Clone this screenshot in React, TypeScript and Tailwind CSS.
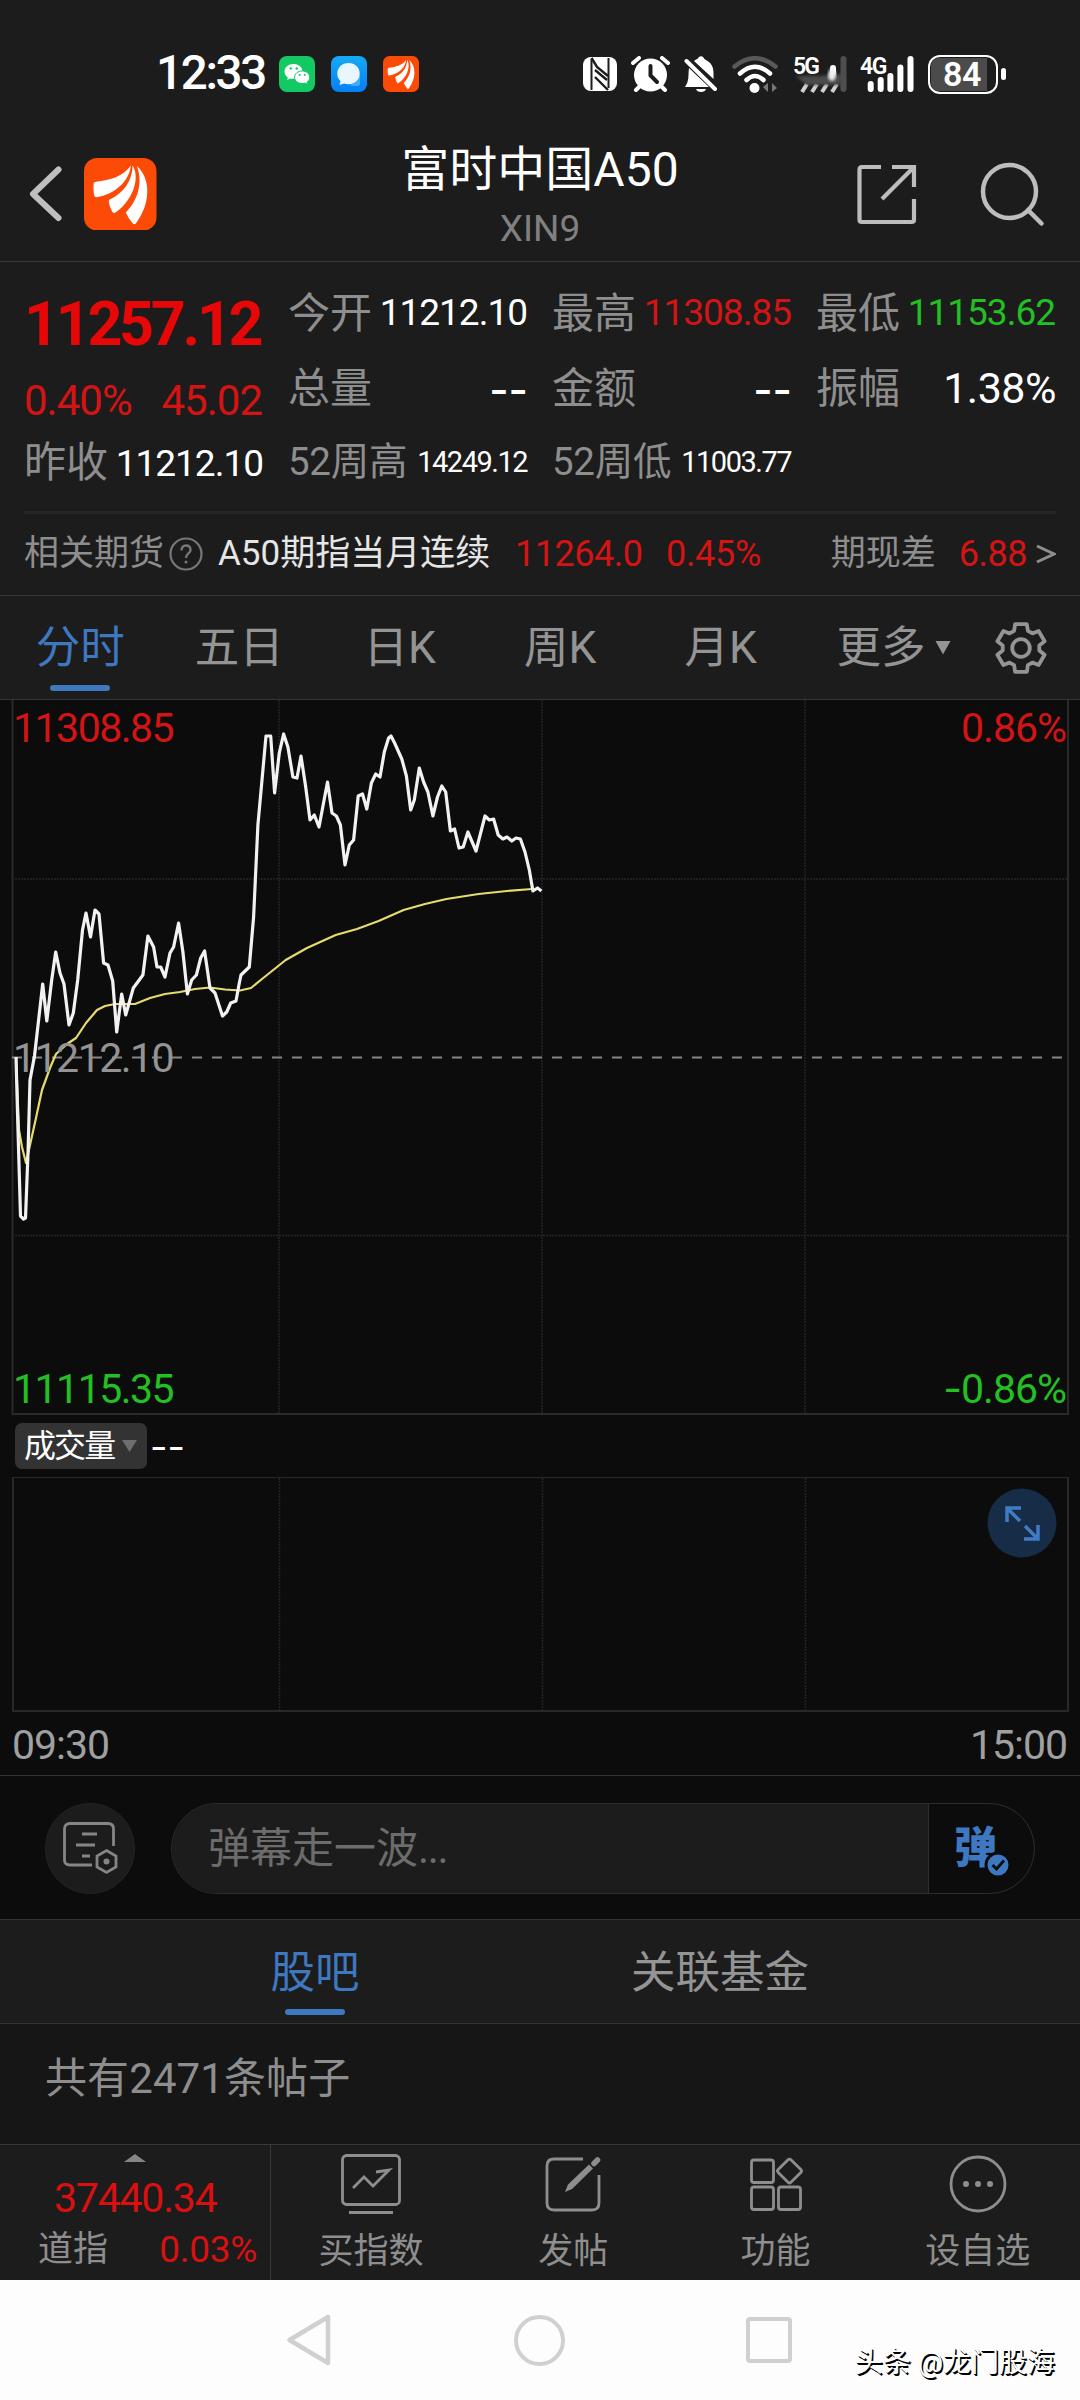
import type { ReactNode } from "react";
import clsx from "clsx";

const PRICE_POINTS =
  "16,1057 17.5,1113 20.5,1216 23.5,1219 25.5,1218 28,1153 30,1080 34.5,1056 42.7,984 46.8,1021 51.7,980 55.7,952 60,973 64,984 69,1025 73.3,1013 77.7,980 82.5,930 86,913 90.5,937 95,910 99,914 103.6,963 108,965 112.7,981 116.7,1032 121.7,994 125.7,1015 133.3,988 138.5,981 142.9,975 147.9,936 153.6,947 157,967 160.7,967 165,977 170,953 173.6,947 178.6,923 182.9,952 187.4,994 191.7,980 196.4,975 200.7,958 204.6,951 210,988 215,993 222.5,1016 226.7,1012 230.7,1003 236,1001 239.3,983 241,975 249.3,967 253.6,917 257.9,825 266,736 270.7,736 274.6,793 279.3,753 283.6,734 287.9,747 292.9,777 297,778 301,756 305.7,787 310,820 314.3,815 319,827 327.5,782 332,813 336.4,816 340.4,825 345,865 349.3,845 353.6,840 358.2,796 362.5,794 366.8,809 371.4,783 375.7,774 380,777 384.3,752 388.6,738 391,736 394.6,743 401.8,759 406.4,776 410.7,810 414.3,800 419.3,768 423.6,782 427.9,792 432.9,816 437.5,797 441.8,786 445.7,792 450.4,831 454.6,829 459,848 463.2,847 467.9,832 476,851 485,816 489.3,820 493.6,819 498.2,835 502.9,839 507,837 511.8,841 516,838 520.4,839 525,852 529.3,870 532.9,891 537.5,888 541.4,891";

const AVERAGE_POINTS =
  "16,1057 19,1130 22,1147 26,1163 30,1145 36,1118 42,1090 50,1068 56,1054 67,1044 76,1038 86,1023 97,1010 105,1006 115,1004 135,1004 150,998 165,994 180,992 195,989 210,987.5 225,989.5 240,990.5 251,988 262,979 285.7,960 307,948 335.7,935 357,929 378.6,921 403.6,910 425,904 446.4,899 478.6,894 507,891 532,889";

const QUOTES = [
  [
    { label: "今开", value: "11212.10" },
    { label: "总量", value: "--" },
    { label: "52周高", value: "14249.12", small: true },
  ],
  [
    { label: "最高", value: "11308.85", color: "text-[#d41414]" },
    { label: "金额", value: "--" },
    { label: "52周低", value: "11003.77", small: true },
  ],
  [
    { label: "最低", value: "11153.62", color: "text-[#22c022]" },
    { label: "振幅", value: "1.38%", large: true },
  ],
];

type Quote = { label: string; value: string; color?: string; small?: boolean; large?: boolean };

// Six-toothed cog outline centred on 27,27
const GEAR_POINTS = [0, 60, 120, 180, 240, 300]
  .flatMap((a) => [
    [a - 22, 18.5],
    [a - 14, 24.5],
    [a + 14, 24.5],
    [a + 22, 18.5],
  ])
  .map(([a, r]) => {
    const t = ((a - 90) * Math.PI) / 180;
    return `${(27 + r * Math.cos(t)).toFixed(1)},${(27 + r * Math.sin(t)).toFixed(1)}`;
  })
  .join(" ");

function BrandLogo({ className }: { className: string }) {
  return (
    <svg viewBox="0 0 72 72" className={className}>
      <rect width="72" height="72" rx="13" fill="#fb4b07" />
      <g fill="#fff">
        <path d="M9.5 25.5Q10 23.7 12 23.5C26 22 39 18.500 46.500 7.500C45 23 31 36 12.500 39Q10.500 39 10 37Q9 31 9.500 25.500Z" />
        <path d="M24.500 43Q24.500 41.500 26 41C39 35 48 23 48.300 7.500C57 22 46 45 30.500 54.500Q29 55 28 53.500Q25.500 49 24.500 43Z" />
        <path d="M52.500 8C67 21 66 46 51.500 65Q50 66.500 48.500 65Q44 60 41.500 54C53 43 59 25 52.500 8Z" />
      </g>
    </svg>
  );
}

function StatusBar() {
  return (
    <div className="flex h-[112px] shrink-0 items-center pt-[36px] pl-[156px]">
      <span className="w-[123px] text-[47.500px] leading-none font-medium tracking-[-2.300px] text-white">12:33</span>
      <svg viewBox="0 0 36 36" className="h-[36px] w-[36px]">
        <rect width="36" height="36" rx="8" fill="#13c964" />
        <path d="M14.500 8C9.500 8 5.500 11.300 5.500 15.500C5.500 18 6.800 20 8.800 21.300L8.200 24L11.300 22.400Q13 22.900 14.500 22.800C20 22.500 23.500 19.500 23.500 15.500C23.500 11.300 19.500 8 14.500 8Z" fill="#fff" />
        <path d="M23.200 15C18.800 15 15.600 17.700 15.600 21.300S18.800 27.500 23.200 27.500Q24.700 27.500 26 27.100L28.600 28.500L28 26.200C29.700 25.100 30.700 23.300 30.700 21.300C30.700 17.700 27.500 15 23.200 15Z" fill="#fff" stroke="#13c964" />
        <g fill="#13c964">
          <circle cx="11.700" cy="12.500" r="1.200" />
          <circle cx="17.700" cy="12.500" r="1.200" />
          <circle cx="20.700" cy="19" r="1" />
          <circle cx="25.700" cy="19" r="1" />
        </g>
      </svg>
      <svg viewBox="0 0 36 36" className="ml-[16px] h-[36px] w-[36px]">
        <defs>
          <linearGradient id="msg" x1="0" y1="0" x2="0" y2="1">
            <stop offset="0" stopColor="#16aaf5" />
            <stop offset="1" stopColor="#067ff5" />
          </linearGradient>
        </defs>
        <rect width="36" height="36" rx="8" fill="url(#msg)" />
        <path d="M20 19H29V28Q29 30 27 30H20Z" fill="#3faaf8" />
        <path d="M17.500 7C11 7 6.300 11.800 6.300 17.500Q6.300 22 9.500 25L8.500 29L13 27.500Q15 28.200 17.500 28.200C24 28.200 28.700 23.500 28.700 17.500S24 7 17.500 7Z" fill="#e8f6ff" />
      </svg>
      <BrandLogo className="ml-[16px] h-[36px] w-[36px]" />

      <svg viewBox="0 0 34 36" className="ml-[164px] h-[36px] w-[34px]" fill="none">
        <rect x="0" y="1" width="34" height="34" rx="8" fill="#fff" />
        <g stroke="#1c1c1c" strokeWidth="2">
          <path d="M8.500 3V34M25.500 2V32" />
          <path d="M8.500 2L14 11L25 20M12 14L24 24M12 21L25 34" strokeWidth="2.400" />
        </g>
      </svg>
      <svg viewBox="0 0 39 36" className="ml-[14px] h-[36px] w-[39px]" fill="none">
        <circle cx="19.500" cy="19" r="16.500" fill="#fff" />
        <path d="M2 7L8 2M37 7L31 2M8 31L5 34M31 31L34 34" stroke="#fff" strokeWidth="4" strokeLinecap="round" />
        <path d="M19.500 10V19.500L26 26" stroke="#1c1c1c" strokeWidth="4" strokeLinecap="round" />
      </svg>
      <svg viewBox="0 0 34 36" className="ml-[14px] h-[36px] w-[34px]" fill="none">
        <path d="M12 3.500Q14 3 14.500 1.500Q17 -1 19.500 1.500Q20 3 22 4C27.500 7 29.500 11 29.500 17V23L10 5Q11 4 12 3.500Z" fill="#fff" />
        <path d="M5 12Q4.500 15 4.500 19Q4.500 26 1 31H25Z" fill="#fff" />
        <path d="M12 33H22Q21 36 17 36T12 33Z" fill="#fff" />
        <path d="M2.500 5L31 33" stroke="#fff" strokeWidth="4" strokeLinecap="round" />
      </svg>
      <svg viewBox="0 0 47 37" className="ml-[14px] h-[37px] w-[47px]" fill="none" strokeLinecap="round">
        <path d="M2.500 10.500Q23 -6 43.500 10.500" stroke="#595959" strokeWidth="4.500" />
        <path d="M8 17.500Q23 4 38 17.500M14.500 24Q23 16 31.500 24" stroke="#fff" strokeWidth="4.500" />
        <circle cx="22.500" cy="32" r="5" fill="#fff" />
        <path d="M36 27V36L31 31ZM40 36V27L45 32Z" fill="#777" />
      </svg>
      <svg viewBox="0 0 54 37" className="ml-[14px] h-[37px] w-[54px] overflow-visible">
        <defs>
          <filter id="smear">
            <feGaussianBlur stdDeviation="1.800" />
          </filter>
        </defs>
        <text x="0" y="17.500" fill="#fff" fontSize="23" fontWeight="600" letterSpacing="-2">5G</text>
        <rect x="47.500" y="0" width="6" height="36" rx="3" fill="#4e4e4e" />
        <path d="M9 36L14 28M19 36L24 28M29 36L34 28M39 36L44 28" stroke="#d0d0d0" strokeWidth="4" />
        <rect x="37" y="9" width="6" height="16" rx="3" fill="#fff" />
        <path d="M3 20L26 20L50 18L48 29L14 29Z" fill="#4c4c4c" filter="url(#smear)" />
        <ellipse cx="39" cy="19" rx="4" ry="6" fill="#eee" filter="url(#smear)" />
      </svg>
      <svg viewBox="0 0 55 37" className="ml-[13px] h-[37px] w-[55px] overflow-visible" fill="#fff">
        <text x="0" y="17.500" fontSize="23" fontWeight="600" letterSpacing="-1.500">4G</text>
        <rect x="7.700" y="25" width="6" height="11" rx="3" />
        <rect x="17.700" y="21" width="6" height="15" rx="3" />
        <rect x="27.400" y="17" width="6" height="19" rx="3" />
        <rect x="37.400" y="8.500" width="6" height="27.500" rx="3" />
        <rect x="47.500" y="0" width="6" height="36" rx="3" />
      </svg>
      <div className="ml-[13px] flex items-center gap-[3px]">
        <div className="flex h-[39px] w-[70px] items-center rounded-[12px] border-[2.500px] border-white bg-[#1c1c1c] p-[1px]">
          <div className="flex h-full w-[56px] items-center justify-center rounded-l-[8px] bg-[#4b4b4b] pl-[6px] text-[34px] leading-none font-semibold tracking-[-0.500px] text-white">84</div>
        </div>
        <div className="h-[12px] w-[5px] rounded-full bg-white" />
      </div>
    </div>
  );
}

function Header() {
  return (
    <div className="flex h-[150px] shrink-0 items-center border-b border-[#383838] pt-[15px]">
      <div className="flex w-[270px] items-center pl-[28px]">
        <svg viewBox="0 0 36 58" className="h-[58px] w-[36px]" fill="none">
          <path d="M30.500 4.500L5 29L30.500 53" stroke="#bfbfbf" strokeWidth="6" strokeLinecap="round" strokeLinejoin="round" />
        </svg>
        <BrandLogo className="ml-[20px] h-[72.500px] w-[72.500px]" />
      </div>
      <div className="mt-[14px] flex flex-1 flex-col items-center self-start">
        <div className="h-[58px] text-[48px] leading-[58px] whitespace-nowrap text-white">富时中国A50</div>
        <div className="h-[58px] text-[37px] leading-[59px] text-[#808080]">XIN9</div>
      </div>
      <div className="flex w-[270px] items-center pl-[46px]">
        <svg viewBox="0 0 62 62" className="h-[62px] w-[62px]" fill="none" stroke="#bdbdbd" strokeWidth="4.200">
          <path d="M25 4H6Q3.500 4 3.500 6.500V56.500Q3.500 59 6 59H55.500Q58 59 58 56.500V36" />
          <path d="M36 4H58V24M58 4L26 36" />
        </svg>
        <svg viewBox="0 0 66 66" className="ml-[62px] h-[66px] w-[66px]" fill="none" stroke="#bdbdbd">
          <circle cx="29.500" cy="30.500" r="26.500" strokeWidth="4.500" />
          <path d="M48 49L61.500 62.500" strokeWidth="4.500" strokeLinecap="round" />
        </svg>
      </div>
    </div>
  );
}

function QuoteRow({ label, value, color = "text-white", small, large }: Quote) {
  return (
    <div className="flex h-[75px] items-center justify-between whitespace-nowrap">
      <span className={clsx("leading-none text-[#8e8e8e]", small ? "text-[38.500px] tracking-[-0.300px]" : "pt-[2px] text-[42px]")}>{label}</span>
      <span
        className={clsx(
          "leading-none",
          color,
          value === "--" && "pt-[4px] font-['Inter'] text-[42px] font-medium",
          value !== "--" && small && "pr-[1px] text-[29px] tracking-[-1.500px]",
          value !== "--" && large && "pt-[2px] text-[43px] tracking-[-0.500px]",
          value !== "--" && !small && !large && "pr-[1px] text-[37px] tracking-[-1px]",
        )}
      >
        {value}
      </span>
    </div>
  );
}

function QuotePanel() {
  return (
    <div className="shrink-0 px-[24px] pt-[13px]">
      <div className="grid h-[236px] grid-cols-4 gap-[24px]">
        <div className="whitespace-nowrap">
          <div className="flex h-[98px] items-center pt-[1px] text-[61px] leading-none font-bold tracking-[-3.300px] text-[#e60808]">11257.12</div>
          <div className="flex h-[54px] items-center justify-between pt-[1px] pr-[2px] text-[42px] leading-none tracking-[-1px] text-[#d41414]">
            <span>0.40%</span>
            <span>45.02</span>
          </div>
          <div className="flex h-[72px] items-center justify-between pr-[1px] leading-none">
            <span className="text-[42px] text-[#8e8e8e]">昨收</span>
            <span className="text-[37px] tracking-[-1px] text-white">11212.10</span>
          </div>
        </div>
        {QUOTES.map((column, i) => (
          <div key={i}>
            {column.map((q) => (
              <QuoteRow key={q.label} {...q} />
            ))}
          </div>
        ))}
      </div>
      <div className="h-[3px] bg-[#262626]" />
      <div className="flex h-[81px] items-center pb-[2px] text-[35px] leading-none whitespace-nowrap text-[#8e8e8e]">
        <span className="w-[145px]">相关期货</span>
        <svg viewBox="0 0 34 34" className="h-[34px] w-[34px]" fill="none" stroke="#777">
          <circle cx="17" cy="17" r="15.500" strokeWidth="2.200" />
          <path d="M12.500 13.500Q12.500 8.500 17 8.500T21.500 13C21.500 16.500 17 16.500 17 21" strokeWidth="2.400" />
          <circle cx="17" cy="25" r="1.500" fill="#777" stroke="none" />
        </svg>
        <span className="ml-[15px] w-[297px] text-[#e6e6e6]">A50期指当月连续</span>
        <span className="w-[151px] text-[36px] tracking-[-0.500px] text-[#d41414]">11264.0</span>
        <span className="text-[36px] tracking-[-0.300px] text-[#d41414]">0.45%</span>
        <span className="ml-auto">期现差</span>
        <span className="ml-[23px] text-[36px] tracking-[-0.500px] text-[#d41414]">6.88</span>
        <svg viewBox="0 0 20 20" className="ml-[9px] h-[20px] w-[20px]" fill="none">
          <path d="M1 2L18 10L1 18" stroke="#8e8e8e" strokeWidth="3" />
        </svg>
      </div>
    </div>
  );
}

function PeriodTabs() {
  return (
    <div className="flex h-[105px] shrink-0 items-center border-y border-[#363636] text-[44.500px] leading-none text-[#949494]">
      {["分时", "五日", "日K", "周K", "月K"].map((tab, i) => (
        <div key={tab} className={clsx("relative flex h-full w-[160.500px] items-center justify-center pt-[2px]", i === 0 ? "text-[#3d78c0]" : "pr-[3px]")}>
          {tab}
          {i === 0 && <span className="absolute bottom-[8px] h-[6px] w-[60px] rounded-full bg-[#3d78c0]" />}
        </div>
      ))}
      <span className="ml-[34px] pt-[2px]">更多</span>
      <svg viewBox="0 0 16 14" className="ml-[9px] h-[14px] w-[16px]">
        <path d="M0.500 0H15.500L8 13.500Z" fill="#949494" />
      </svg>
      <svg viewBox="0 0 54 54" className="ml-[43px] h-[54px] w-[54px]" fill="none" stroke="#949494" strokeWidth="3.800">
        <polygon points={GEAR_POINTS} strokeLinejoin="round" />
        <circle cx="27" cy="27" r="8.800" />
      </svg>
    </div>
  );
}

function PriceChart() {
  return (
    <svg viewBox="0 700 1080 716" className="block h-[716px] w-[1080px] shrink-0" fill="none">
      <path d="M12.500 700V1414H1068V700" stroke="#2a2a2a" strokeWidth="2" />
      <g stroke="#242424" strokeWidth="1.500" strokeDasharray="2 1">
        <path d="M279 700V1414M542 700V1414M805 700V1414" />
        <path d="M12 879H1068M12 1235.500H1068" />
      </g>
      <path d="M12 1057.500H1068" stroke="#858585" strokeWidth="2" strokeDasharray="10 10" />
      <polyline points={AVERAGE_POINTS} stroke="#e6dc6e" strokeWidth="2.200" strokeLinejoin="round" />
      <polyline points={PRICE_POINTS} stroke="#f2f2f2" strokeWidth="3.200" strokeLinejoin="round" />
      <g fontSize="41" letterSpacing="-1.500">
        <text x="13" y="742" fill="#d41414">11308.85</text>
        <text x="13" y="1072" fill="#949494">11212.10</text>
        <text x="13" y="1403" fill="#22c022">11115.35</text>
        <text x="1066" y="742" fill="#d41414" textAnchor="end" letterSpacing="-1">0.86%</text>
        <text x="1066" y="1403" fill="#22c022" textAnchor="end" letterSpacing="-1">
          <tspan fontFamily="Inter">-</tspan>0.86%
        </text>
      </g>
    </svg>
  );
}

function VolumeChart() {
  return (
    <div className="h-[360px] shrink-0 border-b border-[#333]">
      <div className="flex h-[61px] items-center pb-[2px] pl-[15px]">
        <div className="flex h-[46px] w-[132px] items-center rounded-[7px] bg-[#333] pl-[9px]">
          <span className="text-[32px] leading-none tracking-[-1.900px] whitespace-nowrap text-white">成交量</span>
          <svg viewBox="0 0 15 12" className="ml-[8px] h-[12px] w-[15px]">
            <path d="M0 0H15L7.500 12Z" fill="#6e6e6e" />
          </svg>
        </div>
        <span className="ml-[3px] font-['Inter'] text-[38px] leading-none text-white">--</span>
      </div>
      <div className="relative ml-[11.500px] h-[235px] w-[1057px] border-2 border-t border-[#282828]">
        <svg viewBox="0 0 1053 232" className="h-[232px] w-[1053px]" stroke="#242424" strokeWidth="1.500" strokeDasharray="2 1">
          <path d="M265.500 0V232M528.500 0V232M791.500 0V232" />
        </svg>
        <svg viewBox="0 0 70 70" className="absolute top-[10px] right-[10px] h-[70px] w-[70px]" fill="none">
          <circle cx="35" cy="35" r="34.500" fill="#172c46" />
          <path d="M20 34V20H34M20 20L33 33M51 37V51H37M51 51L38 38" stroke="#407cc4" strokeWidth="3.500" />
        </svg>
      </div>
      <div className="flex h-[63px] items-center justify-between pt-[3px] pr-[13px] pl-[12px] text-[41px] leading-none tracking-[-1px] text-[#a0a0a0]">
        <span>09:30</span>
        <span>15:00</span>
      </div>
    </div>
  );
}

function DanmuBar() {
  return (
    <div className="flex h-[144px] shrink-0 items-center border-b border-[#333] pt-[1px] pl-[45px]">
      <div className="flex h-[91px] w-[90px] items-center justify-center rounded-full border border-[#242424] bg-[#1c1c1c]">
        <svg viewBox="0 0 56 54" className="h-[54px] w-[56px]" fill="none" stroke="#858585" strokeWidth="2.800">
          <path d="M30 44H8Q2.500 44 2.500 39V8Q2.500 2.500 8 2.500H46Q51.500 2.500 51.500 8V25" />
          <path d="M20 13H35M14 24H33M20 35H28" />
          <path d="M44.500 29.500L54 35V46L44.500 51.500L35 46V35Z" />
          <circle cx="44.500" cy="40.500" r="3" fill="#858585" stroke="none" />
        </svg>
      </div>
      <div className="ml-[36px] flex h-[91px] w-[864px] overflow-hidden rounded-full border border-[#2e2e2e]">
        <div className="flex w-[757px] items-center border-r border-[#2e2e2e] bg-[#1c1c1c] pt-[2px] pl-[36px] text-[42px] leading-none text-[#6c6c6c]">
          弹幕走一波<span className="tracking-[-1.300px]">...</span>
        </div>
        <div className="relative flex flex-1 items-center pl-[25px]">
          <span className="text-[43px] leading-none font-black text-[#3d78c0]">弹</span>
          <svg viewBox="0 0 28 28" className="absolute top-[47px] left-[55px] h-[28px] w-[28px]" fill="none">
            <circle cx="14" cy="14" r="12" fill="#3d78c0" stroke="#0c0c0c" strokeWidth="3" />
            <path d="M8.500 14L12.500 18L20 9.500" stroke="#0c0c0c" strokeWidth="2.800" />
          </svg>
        </div>
      </div>
    </div>
  );
}

function Community() {
  return (
    <>
      <div className="flex h-[104px] shrink-0 border-b border-[#333] bg-[#1c1c1c] px-[112.500px] text-[44.500px] leading-none text-[#949494]">
        <div className="relative flex w-[405px] items-center justify-center pt-[3px] text-[#3d78c0]">
          股吧
          <span className="absolute bottom-[8px] h-[6px] w-[60px] rounded-full bg-[#3d78c0]" />
        </div>
        <div className="flex w-[405px] items-center justify-center pt-[3px]">关联基金</div>
      </div>
      <div className="flex h-[120px] shrink-0 items-center bg-[#161616] pb-[11px] pl-[45px] text-[42px] leading-none tracking-[0.100px] text-[#8e8e8e]">
        共有2471条帖子
      </div>
    </>
  );
}

function ToolItem({ label, children }: { label: string; children: ReactNode }) {
  return (
    <div className="flex flex-1 flex-col items-center pt-[8px] pr-[2px] text-[#8e8e8e]">
      <svg viewBox="0 0 62 62" className="h-[62px] w-[62px]" fill="none" stroke="currentColor" strokeWidth="2.800">
        {children}
      </svg>
      <span className="mt-[19px] text-[35px] leading-none">{label}</span>
    </div>
  );
}

function BottomBar() {
  return (
    <div className="flex h-[136px] shrink-0 border-t border-[#383838] bg-[#1c1c1c]">
      <div className="flex w-[271px] flex-col border-r border-[#383838] whitespace-nowrap">
        <svg viewBox="0 0 22 8" className="mt-[9px] ml-[124px] h-[8px] w-[22px]">
          <path d="M11 0L22 8H0Z" fill="#858585" />
        </svg>
        <div className="mt-[15px] pl-[54px] text-[41px] leading-[43px] tracking-[-1.200px] text-[#d81010]">37440.34</div>
        <div className="mt-[7px] flex h-[44px] items-center justify-between pr-[13px] pl-[38px] leading-none">
          <span className="text-[35px] text-[#8e8e8e]">道指</span>
          <span className="text-[37px] tracking-[-0.300px] text-[#d81010]">0.03%</span>
        </div>
      </div>
      <ToolItem label="买指数">
        <rect x="2.500" y="2.500" width="57" height="49" rx="4" />
        <path d="M13 35L24 24L33 33L49 17M36 19L49 17L41 25" />
        <path d="M9 59.500H53" />
      </ToolItem>
      <ToolItem label="发帖">
        <path d="M41 6H12Q5 6 5 13V50Q5 57 12 57H50Q57 57 57 50V22" />
        <path d="M23 39L26 31.500L47 11.500L51 15.500L30 36Z" fill="currentColor" stroke="none" />
        <path d="M52 10.500L55.500 7" strokeWidth="5.500" strokeLinecap="round" />
      </ToolItem>
      <ToolItem label="功能">
        <rect x="6.500" y="7" width="22" height="22.500" rx="2.500" />
        <rect x="6.500" y="34" width="22" height="22.500" rx="2.500" />
        <rect x="33.500" y="34" width="22" height="22.500" rx="2.500" />
        <rect x="35.500" y="9" width="18" height="18" rx="2" transform="rotate(45 44.500 18)" />
      </ToolItem>
      <ToolItem label="设自选">
        <circle cx="31" cy="31" r="27" />
        <g fill="currentColor" stroke="none">
          <circle cx="19" cy="31" r="3" />
          <circle cx="31" cy="31" r="3" />
          <circle cx="43" cy="31" r="3" />
        </g>
      </ToolItem>
    </div>
  );
}

function SystemNav() {
  return (
    <div className="flex h-[120px] shrink-0 items-center bg-[#fdfdfd] pl-[286px]">
      <svg viewBox="0 0 46 54" className="h-[54px] w-[46px]" fill="none">
        <path d="M42 4V50L3.500 27Z" stroke="#d0d0d0" strokeWidth="4.500" strokeLinejoin="round" />
      </svg>
      <div className="ml-[182px] h-[51px] w-[51px] rounded-full border-[4.500px] border-[#d0d0d0]" />
      <div className="ml-[181px] h-[46px] w-[46px] rounded-[4px] border-[4.500px] border-[#d0d0d0]" />
      <div className="mt-[45px] ml-[63px] text-[28px] leading-none whitespace-nowrap text-white [text-shadow:1.5px_1.5px_0_#000,0.5px_0.5px_0_#000]">
        头条 @龙门股海
      </div>
    </div>
  );
}

export default function App() {
  return (
    <div className="flex h-[2400px] w-[1080px] flex-col overflow-hidden bg-[#0c0c0c] font-['Roboto','Noto_Sans_CJK_SC',sans-serif]">
      <div className="shrink-0 bg-[#1c1c1c]">
        <StatusBar />
        <Header />
        <QuotePanel />
        <PeriodTabs />
      </div>
      <PriceChart />
      <VolumeChart />
      <DanmuBar />
      <Community />
      <BottomBar />
      <SystemNav />
    </div>
  );
}
